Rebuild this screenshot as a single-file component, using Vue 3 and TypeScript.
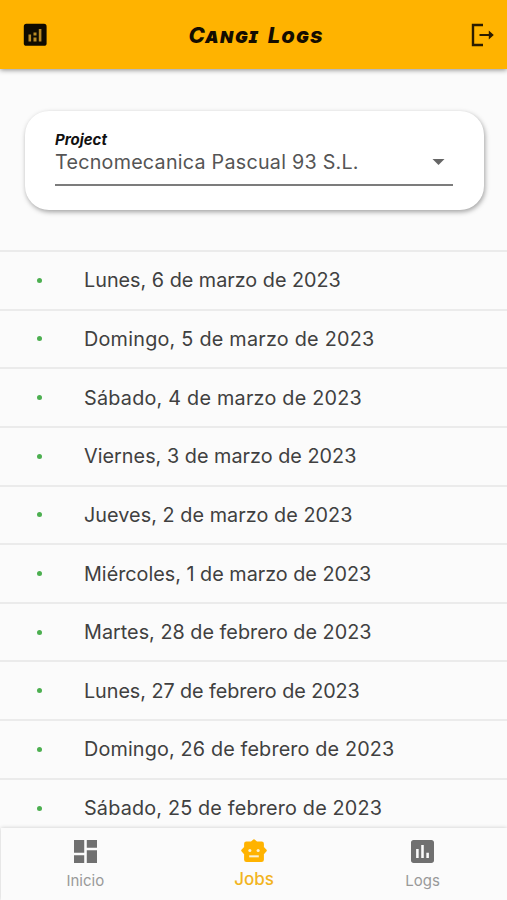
<script setup lang="ts">
interface Job {
  label: string
  tracking: number
}

interface Tab {
  id: string
  label: string
}

const jobs: Job[] = [
  { label: 'Lunes, 6 de marzo de 2023', tracking: 0 },
  { label: 'Domingo, 5 de marzo de 2023', tracking: 0.24 },
  { label: 'Sábado, 4 de marzo de 2023', tracking: 0.23 },
  { label: 'Viernes, 3 de marzo de 2023', tracking: 0.03 },
  { label: 'Jueves, 2 de marzo de 2023', tracking: 0.06 },
  { label: 'Miércoles, 1 de marzo de 2023', tracking: 0 },
  { label: 'Martes, 28 de febrero de 2023', tracking: 0.02 },
  { label: 'Lunes, 27 de febrero de 2023', tracking: -0.06 },
  { label: 'Domingo, 26 de febrero de 2023', tracking: 0.15 },
  { label: 'Sábado, 25 de febrero de 2023', tracking: 0.18 },
]

const tabs: Tab[] = [
  { id: 'home', label: 'Inicio' },
  { id: 'jobs', label: 'Jobs' },
  { id: 'logs', label: 'Logs' },
]
const active = 'jobs'
</script>

<template>
  <div class="screen">
    <header class="bar">
      <svg class="icon brand" viewBox="0 0 24 24">
        <rect x="0.8" y="0.8" width="22.8" height="22" rx="2.6" fill="#100b00" />
        <path d="M5.500 11.500h2.600v7H5.500zM10.500 14.500h3v4h-3zM10.500 9.500h3v3h-3zM15.800 6h2.600v12.500h-2.600z" fill="#b98a24" />
      </svg>
      <h1 class="title">Cangi Logs</h1>
      <svg class="icon exit" viewBox="0 0 24 24">
        <path d="M12 2H2v20h10" fill="none" stroke="#2b1c00" stroke-width="2.400" />
        <path d="M8.500 10.900h9.300V7.500l5 4.500-5 4.500v-3.400H8.500z" fill="#2b1c00" />
      </svg>
    </header>

    <main class="content">
      <section class="card">
        <div class="field">
          <label class="caption">Project</label>
          <div class="select">
            <span class="value">Tecnomecanica Pascual 93 S.L.</span>
            <svg class="caret" viewBox="0 0 12 6"><path d="M0 0h12L6 6z" fill="#666" /></svg>
          </div>
        </div>
      </section>

      <ul class="list">
        <li v-for="job in jobs" :key="job.label" class="row">
          <span class="dot"></span>
          <span class="date" :style="{ letterSpacing: job.tracking + 'px' }">{{ job.label }}</span>
        </li>
      </ul>
    </main>

    <nav class="tabs">
      <a v-for="tab in tabs" :key="tab.id" class="tab" :class="{ active: tab.id === active }">
        <svg v-if="tab.id === 'home'" class="tab-icon" viewBox="3 3 18 18">
          <path d="M3 13h8V3H3v10zm0 8h8v-6H3v6zm10 0h8V11h-8v10zm0-18v6h8V3h-8z" fill="currentColor" />
        </svg>
        <svg v-else-if="tab.id === 'jobs'" class="tab-icon robot" viewBox="0 0 28 26">
          <path d="M14 2.300l2.800 2.400h5.200q1.300 0 1.300 1.300v3.700L26.300 13l-3 3.500V22.500q0 1.500-1.500 1.500H6.200q-1.500 0-1.500-1.500v-6L1.700 13l3-3.300V6q0-1.300 1.300-1.300h5.200z" fill="currentColor" stroke="currentColor" stroke-width="2" stroke-linejoin="round" />
          <circle cx="9.700" cy="13" r="1.600" fill="#fbf1d4" />
          <circle cx="18.300" cy="13" r="1.600" fill="#fbf1d4" />
          <path d="M9 18h10v2.100H9z" fill="#fbf1d4" />
        </svg>
        <svg v-else class="tab-icon" viewBox="3 3 18 18">
          <path d="M19 3H5c-1.100 0-2 .9-2 2v14c0 1.100.9 2 2 2h14c1.100 0 2-.9 2-2V5c0-1.100-.9-2-2-2zM9 17H7v-7h2v7zm4 0h-2V7h2v10zm4 0h-2v-4h2v4z" fill="currentColor" />
        </svg>
        <span class="tab-label">{{ tab.label }}</span>
      </a>
    </nav>
  </div>
</template>

<style>
body {
  background: #fbfbfb;
  overflow: hidden;
}
</style>

<style scoped>
.screen {
  display: flex;
  flex-direction: column;
  height: 900px;
  overflow: hidden;
  background: #fbfbfb;
  font-family: Inter, 'Open Sans', sans-serif;
  color: #404040;
}
.bar {
  flex: none;
  display: flex;
  align-items: center;
  justify-content: space-between;
  box-sizing: border-box;
  height: 69px;
  padding: 0 12px 0 23px;
  background: #ffb300;
  box-shadow: 0 1px 5px rgba(0, 0, 0, 0.45);
}
.icon {
  width: 24px;
  height: 24px;
}
.title {
  margin: 0 6px 0 0;
  font-size: 22px;
  line-height: 30px;
  font-weight: 800;
  font-style: italic;
  font-variant: small-caps;
  letter-spacing: 1.100px;
  word-spacing: 3px;
  color: #140d00;
}
.content {
  flex: 1;
  min-height: 0;
  overflow: hidden;
}
.card {
  box-sizing: border-box;
  height: 99px;
  margin: 42px 23px 40px 25px;
  padding: 20px 31px 0 30px;
  border-radius: 24px;
  background: #fff;
  box-shadow: 1px 2px 5px rgba(0, 0, 0, 0.36);
}
.field {
  height: 53px;
  border-bottom: 2px solid #7c7c7c;
}
.caption {
  display: block;
  font-size: 15px;
  line-height: 18px;
  font-weight: 700;
  font-style: italic;
  color: #111;
}
.select {
  display: flex;
  align-items: center;
  justify-content: space-between;
  height: 26px;
  padding-right: 8px;
}
.value {
  font-size: 19.700px;
  line-height: 26px;
  letter-spacing: 0.260px;
  color: #555;
}
.caret {
  width: 13px;
  height: 6px;
}
.list {
  margin: 0;
  padding: 0;
  list-style: none;
}
.row {
  display: flex;
  align-items: center;
  box-sizing: border-box;
  height: 58.650px;
  padding-left: 37px;
  border-top: 2px solid #ebebeb;
}
.dot {
  width: 5px;
  height: 5px;
  margin-right: 42px;
  border-radius: 50%;
  background: #4caf50;
}
.date {
  font-size: 19.800px;
  white-space: nowrap;
}
.tabs {
  flex: none;
  display: grid;
  grid-template-columns: repeat(3, 1fr);
  box-sizing: border-box;
  height: 72px;
  margin: 0 0 0 1px;
  background: #fbfbfb;
  box-shadow: 0 0 4px rgba(0, 0, 0, 0.2);
  z-index: 1;
}
.tab {
  display: flex;
  flex-direction: column;
  align-items: center;
  padding-top: 12px;
  color: #707070;
}
.tab-icon {
  width: 23px;
  height: 23px;
}
.robot {
  width: 28px;
  height: 25px;
}
.tab-label {
  margin-top: 8px;
  font-size: 15px;
  line-height: 20px;
  color: #999;
}
.active {
  padding-top: 10px;
  color: #ffb300;
}
.active .tab-label {
  margin-top: 6px;
  font-size: 17px;
  font-weight: 500;
  color: #f2b41e;
}
</style>
